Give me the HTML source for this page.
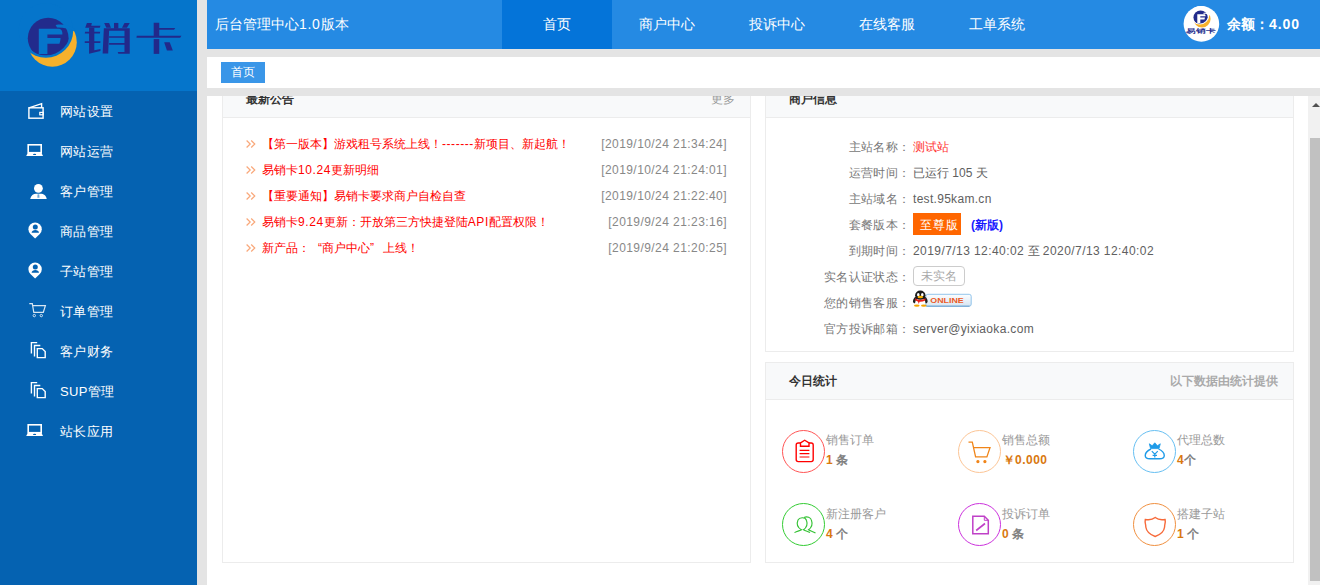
<!DOCTYPE html>
<html><head><meta charset="utf-8">
<style>
*{margin:0;padding:0;box-sizing:border-box}
html,body{width:1320px;height:585px;overflow:hidden;background:#e4e4e4;font-family:"Liberation Sans",sans-serif;}
.abs{position:absolute}
#side{left:0;top:0;width:197px;height:585px;background:#0562b1}
#logo{left:0;top:0;width:197px;height:91px;background:#0575cb}
.mi{position:absolute;left:0;width:197px;height:40px;color:#fff;font-size:13px;line-height:40px}
.mi span{position:absolute;left:60px;top:1px;letter-spacing:0.4px}
.mi svg{position:absolute;left:26px;top:12px}
#hdr{left:207px;top:0;width:1113px;height:49px;background:#258ae3;color:#fff}
.tab{position:absolute;top:0;width:110px;height:49px;line-height:49px;text-align:center;font-size:14px;color:#fff}
#bc{left:207px;top:57px;width:1113px;height:31px;background:#fff}
#main{left:207px;top:96px;width:1118px;height:489px;background:#fff;overflow:hidden}
.panel{position:absolute;border:1px solid #ececec;background:#fff}
.ph{position:absolute;left:0;top:0;right:0;height:37px;background:#f8f9fa;border-bottom:1px solid #ececec;font-size:12px;font-weight:bold;color:#333;line-height:36px;padding-left:23px}
.row{position:absolute;left:0;height:26px;line-height:26px;font-size:12px;white-space:nowrap}
.ann{position:absolute;left:0;width:527px;height:26px;line-height:26px;font-size:12px;white-space:nowrap}
.ann i{position:absolute;left:23px;top:9px;width:10px;height:8px;line-height:0}
.ann b{position:absolute;left:39px;font-weight:normal;color:#f00}
.ann em{position:absolute;right:23px;font-style:normal;color:#888}
.info{position:absolute;left:0;width:527px;height:26px;line-height:26px;font-size:12px;white-space:nowrap;color:#777}
.info u{position:absolute;right:382.6px;text-decoration:none;letter-spacing:0.35px}
.info s{position:absolute;left:147px;text-decoration:none;color:#606060}
.badge{display:inline-block;background:#f60;color:#fff;padding:0 0 0 7px;height:22px;line-height:24px;width:48px;letter-spacing:0.8px;overflow:hidden;vertical-align:top;margin-top:1px}
.unv{display:inline-block;border:1px solid #ccc;border-radius:4px;color:#aaa;padding:0 7px;height:20px;line-height:18px;position:relative;top:-1px}
.circ{position:absolute;width:43px;height:43px;border:1px solid;border-radius:50%}
.st{position:absolute;height:16px;line-height:16px;font-size:12px;color:#999;white-space:nowrap}
.sv{position:absolute;height:16px;line-height:16px;font-size:12px;color:#808080;white-space:nowrap;font-weight:bold}
.sv b{color:#d9780f;font-weight:bold}
.fq{display:inline-block;width:12px;text-align:right}
.fq+span{}
.n{letter-spacing:0.43px}
.n2{letter-spacing:0.6px}
</style></head><body>
<div id="side" class="abs">
  <div id="logo" class="abs">
    <svg class="abs" style="left:0;top:0" width="197" height="91" viewBox="0 0 197 91">
      <defs><clipPath id="cb"><circle cx="45.9" cy="30.5" r="24.8"/></clipPath></defs>
      <circle cx="52.3" cy="42.2" r="24.5" fill="#f6b12c"/>
      <circle cx="45.9" cy="30.5" r="27.3" fill="#0575cb"/>
      <circle cx="48.2" cy="38.2" r="20.4" fill="#222b8c" clip-path="url(#cb)"/>
      <path d="M55.6 25 C63 23.6 70 25.2 75.5 29.8 L74 31.2 C69 28.6 63 27.4 57 27.6 Z" fill="#0575cb"/>
      <path d="M38.8 28.8 H58 C61 28.8 62.6 30.5 62.4 34.6 H47.4 V38 H60.6 C60.4 40.5 60 42 59.4 43.7 H47.4 V54 H38.8 Z" fill="#0575cb"/>
    </svg>
    <svg class="abs" style="left:0;top:0" width="197" height="91" viewBox="0 0 197 91">
      <g fill="#22298a">
        <g transform="translate(82 20) scale(0.061576)">
          <path d="M80 48 H160 L150 92 H300 L288 125 H52 Z"/>
          <path d="M50 190 H295 L290 220 H45 Z"/>
          <path d="M45 345 H300 L296 375 H45 Z"/>
          <path d="M115 125 H200 V492 L300 470 V505 L115 550 Z"/>
          <path d="M360 48 H440 L470 125 H395 Z"/>
          <path d="M520 48 H590 V140 H520 Z"/>
          <path d="M690 48 H775 L730 125 H650 Z"/>
          <path d="M355 135 H775 V550 H590 L580 520 H690 V400 H440 V375 H690 V290 H440 V265 H690 V175 H440 L425 545 H335 Z"/>
        </g>
        <g transform="translate(134 20) scale(0.061576)">
          <path d="M320 45 H410 V130 H670 L650 160 H410 V255 H770 L750 290 H40 L45 255 H320 Z"/>
          <path d="M320 310 H410 V550 H320 Z"/>
          <path d="M490 360 H580 L630 495 H535 Z"/>
        </g>
      </g>
    </svg>
  </div>
  <svg class="abs" style="left:0;top:0" width="197" height="585" viewBox="0 0 197 585">
    <g fill="none" stroke="#fff" stroke-width="1.4">
      <!-- wallet -->
      <rect x="28.9" y="107.8" width="14.2" height="10.4"/>
      <path d="M28.9 107.8 L41.6 103.6 V107.8"/>
      <rect x="39.8" y="112.4" width="3.4" height="2.4" stroke-width="1.2"/>
      <!-- laptop -->
      <rect x="28.2" y="144.8" width="13" height="7.9" stroke-width="1.6"/>
      <!-- cart -->
      <path d="M29.3 303.6 H32.3 L33.8 312.3 H43.3 L45.4 305.6 H32.6" stroke-width="1.2" opacity="0.85"/>
      <circle cx="34.3" cy="315.6" r="1.2" stroke-width="0.9" opacity="0.85"/>
      <circle cx="41.3" cy="315.6" r="1.2" stroke-width="0.9" opacity="0.85"/>
      <!-- copy 1 -->
      <path d="M31.4 353.6 V342.6 H37.2 M34.5 356.4 V345.5 H40.3 M37.3 357.6 V348.6 H42.2 L45.2 351.6 V357.6 Z"/>
      <path d="M31.4 393.6 V382.6 H37.2 M34.5 396.4 V385.5 H40.3 M37.3 397.6 V388.6 H42.2 L45.2 391.6 V397.6 Z"/>
      <!-- laptop 2 -->
      <rect x="28.2" y="424.8" width="13" height="7.9" stroke-width="1.6"/>
    </g>
    <g fill="#fff">
      <path d="M26.2 156.1 L28 152.6 H41.3 L43 156.1 Z"/>
      <ellipse cx="34.6" cy="154.4" rx="1.6" ry="0.6" fill="#0562b1"/>
      <path d="M26.2 436.1 L28 432.6 H41.3 L43 436.1 Z"/>
      <ellipse cx="34.6" cy="434.4" rx="1.6" ry="0.6" fill="#0562b1"/>
      <!-- user -->
      <circle cx="38.4" cy="188.3" r="4.4"/>
      <path d="M30.2 199 C30.8 195.5 33.5 193.8 36 193.8 H40.8 C43.5 193.8 46.2 195.5 46.7 199 Z"/>
      <path d="M37.6 194.2 H39.2 L39.5 197.8 H37.3 Z" fill="#0562b1" opacity="0.55"/>
      <!-- pins -->
      <path d="M35.1 238.6 L30.4 234 A6.7 6.7 0 1 1 39.8 234 Z"/>
      <circle cx="35.3" cy="226.9" r="2.5" fill="#0562b1"/>
      <path d="M31.6 232.8 C31.8 230.8 33.4 229.9 35.3 229.9 C37.2 229.9 38.8 230.8 39 232.8 Z" fill="#0562b1"/>
      <path d="M35.1 278.6 L30.4 274 A6.7 6.7 0 1 1 39.8 274 Z"/>
      <circle cx="35.3" cy="266.9" r="2.5" fill="#0562b1"/>
      <path d="M31.6 272.8 C31.8 270.8 33.4 269.9 35.3 269.9 C37.2 269.9 38.8 270.8 39 272.8 Z" fill="#0562b1"/>
    </g>
  </svg>
  <div class="mi" style="top:91px"><span>网站设置</span></div>
  <div class="mi" style="top:131px"><span>网站运营</span></div>
  <div class="mi" style="top:171px"><span>客户管理</span></div>
  <div class="mi" style="top:211px"><span>商品管理</span></div>
  <div class="mi" style="top:251px"><span>子站管理</span></div>
  <div class="mi" style="top:291px"><span>订单管理</span></div>
  <div class="mi" style="top:331px"><span>客户财务</span></div>
  <div class="mi" style="top:371px"><span>SUP管理</span></div>
  <div class="mi" style="top:411px"><span>站长应用</span></div>
</div>
<div id="hdr" class="abs">
  <div class="abs" style="left:8px;top:0;line-height:49px;font-size:14px">后台管理中心<span style="letter-spacing:0.7px">1.0</span>版本</div>
  <div class="tab" style="left:295px;background:#0474d9">首页</div>
  <div class="tab" style="left:405px">商户中心</div>
  <div class="tab" style="left:515px">投诉中心</div>
  <div class="tab" style="left:625px">在线客服</div>
  <div class="tab" style="left:735px">工单系统</div>
  <svg class="abs" style="left:973px;top:3px" width="42" height="42" viewBox="1180 3 42 42">
    <circle cx="1201.4" cy="23.9" r="17.8" fill="#fff"/>
    <defs><clipPath id="cb2"><circle cx="45.9" cy="30.5" r="24.8"/></clipPath><clipPath id="av"><circle cx="1201.4" cy="23.9" r="17.8"/></clipPath></defs>
    <g clip-path="url(#av)"><g transform="translate(1193.3 10.3) scale(0.35) translate(-27.4 -17.4)">
      <circle cx="52.3" cy="42.2" r="24.5" fill="#f6b12c"/>
      <circle cx="45.9" cy="30.5" r="27.3" fill="#fff"/>
      <circle cx="48.2" cy="38.2" r="20.4" fill="#222b8c" clip-path="url(#cb2)"/>
      <path d="M55.6 25 C63 23.6 70 25.2 75.5 29.8 L74 31.2 C69 28.6 63 27.4 57 27.6 Z" fill="#fff"/>
      <path d="M38.8 28.8 H58 C61 28.8 62.6 30.5 62.4 34.6 H47.4 V38 H60.6 C60.4 40.5 60 42 59.4 43.7 H47.4 V54 H38.8 Z" fill="#fff"/>
    </g></g>
    <text x="1186" y="33.8" font-size="8" font-weight="bold" fill="#2a3290" textLength="30" lengthAdjust="spacingAndGlyphs" transform="translate(0 6.1) scale(1 0.8)">易销卡</text>
  </svg>
  <div class="abs" style="left:1020px;top:0;line-height:49px;font-size:14px;font-weight:bold">余额：<span style="letter-spacing:0.9px">4.00</span></div>
</div>
<div id="bc" class="abs">
  <div class="abs" style="left:14px;top:5px;width:44px;height:21px;background:#3a96e8;color:#fff;font-size:12px;line-height:21px;text-align:center">首页</div>
</div>
<div id="main" class="abs">
  <!-- left panel -->
  <div class="panel" style="left:15px;top:-16px;width:529px;height:483px">
    <div class="ph">最新公告<span style="position:absolute;right:15px;top:0;font-weight:normal;color:#999">更多</span></div>
    <div class="ann" style="top:50px"><i><svg width="10" height="8" viewBox="0 0 10 8"><path d="M0.6 0.5 L4.2 4 L0.6 7.5 M5.2 0.5 L8.8 4 L5.2 7.5" fill="none" stroke="#f9a87a" stroke-width="1.2"/></svg></i><b>【第一版本】游戏租号系统上线！<span style="letter-spacing:0.55px">-------</span>新项目、新起航！</b><em class="n">[2019/10/24 21:34:24]</em></div>
    <div class="ann" style="top:76px"><i><svg width="10" height="8" viewBox="0 0 10 8"><path d="M0.6 0.5 L4.2 4 L0.6 7.5 M5.2 0.5 L8.8 4 L5.2 7.5" fill="none" stroke="#f9a87a" stroke-width="1.2"/></svg></i><b>易销卡<span class="n2">10.24</span>更新明细</b><em class="n">[2019/10/24 21:24:01]</em></div>
    <div class="ann" style="top:102px"><i><svg width="10" height="8" viewBox="0 0 10 8"><path d="M0.6 0.5 L4.2 4 L0.6 7.5 M5.2 0.5 L8.8 4 L5.2 7.5" fill="none" stroke="#f9a87a" stroke-width="1.2"/></svg></i><b>【重要通知】易销卡要求商户自检自查</b><em class="n">[2019/10/24 21:22:40]</em></div>
    <div class="ann" style="top:128px"><i><svg width="10" height="8" viewBox="0 0 10 8"><path d="M0.6 0.5 L4.2 4 L0.6 7.5 M5.2 0.5 L8.8 4 L5.2 7.5" fill="none" stroke="#f9a87a" stroke-width="1.2"/></svg></i><b>易销卡<span class="n2">9.24</span>更新：开放第三方快捷登陆<span class="n2">API</span>配置权限！</b><em class="n">[2019/9/24 21:23:16]</em></div>
    <div class="ann" style="top:154px"><i><svg width="10" height="8" viewBox="0 0 10 8"><path d="M0.6 0.5 L4.2 4 L0.6 7.5 M5.2 0.5 L8.8 4 L5.2 7.5" fill="none" stroke="#f9a87a" stroke-width="1.2"/></svg></i><b>新产品：<span class="fq">“</span>商户中心<span class="fq" style="text-align:left;width:13px">”</span>上线！</b><em class="n">[2019/9/24 21:20:25]</em></div>
  </div>
  <!-- right panel 1 -->
  <div class="panel" style="left:558px;top:-16px;width:529px;height:272px">
    <div class="ph">商户信息</div>
    <div class="info" style="top:53px"><u>主站名称：</u><s style="color:#f33">测试站</s></div>
    <div class="info" style="top:79px"><u>运营时间：</u><s>已运行 105 天</s></div>
    <div class="info" style="top:105px"><u>主站域名：</u><s style="letter-spacing:0.3px">test.95kam.cn</s></div>
    <div class="info" style="top:131px"><u>套餐版本：</u><s><span class="badge">至尊版</span><span style="color:#1a1aff;font-weight:bold;margin-left:10px">(新版)</span></s></div>
    <div class="info" style="top:157px"><u>到期时间：</u><s><span class="n">2019/7/13 12:40:02</span> 至 <span class="n">2020/7/13 12:40:02</span></s></div>
    <div class="info" style="top:183px"><u>实名认证状态：</u><s><span class="unv">未实名</span></s></div>
    <div class="info" style="top:209px"><u>您的销售客服：</u><s><svg style="position:absolute;left:-2px;top:0px" width="62" height="20" viewBox="911 290 62 20">
      <defs><linearGradient id="qg" x1="0" y1="0" x2="0" y2="1"><stop offset="0" stop-color="#fdfeff"/><stop offset="1" stop-color="#d6e5f2"/></linearGradient></defs>
      <rect x="925.8" y="294.3" width="45.4" height="11.9" rx="2" fill="url(#qg)" stroke="#86bde9" stroke-width="0.9"/>
      <path d="M926 306.2 H969.5" stroke="#5f95c8" stroke-width="0.8"/>
      <text x="930.3" y="303.1" font-family="Liberation Sans" font-weight="bold" font-size="7" fill="#ec5a26" textLength="33.4" lengthAdjust="spacingAndGlyphs">ONLINE</text>
      <ellipse cx="915.2" cy="300" rx="1.9" ry="3.4" fill="#222" transform="rotate(20 915.2 300)"/>
      <ellipse cx="925.4" cy="300" rx="1.9" ry="3.4" fill="#222" transform="rotate(-20 925.4 300)"/>
      <ellipse cx="920.3" cy="302.2" rx="5" ry="4.4" fill="#fff"/>
      <ellipse cx="920.3" cy="295.2" rx="5.2" ry="4.6" fill="#1c1c1c"/>
      <ellipse cx="918.3" cy="294.7" rx="1.3" ry="1.6" fill="#fff"/>
      <ellipse cx="922.3" cy="294.7" rx="1.3" ry="1.6" fill="#fff"/>
      <ellipse cx="920.3" cy="297" rx="2.8" ry="1.2" fill="#f8b400"/>
      <path d="M915 298.2 Q920.3 301.8 925.6 298.2 L925.2 300.6 Q920.3 303 915.4 300.6 Z" fill="#e8201a"/>
      <path d="M917.6 300.5 L918.8 304 L919.8 300.8 Z" fill="#e8201a"/>
      <ellipse cx="916.8" cy="305.6" rx="2.8" ry="1.2" fill="#f5a500"/>
      <ellipse cx="923.8" cy="305.6" rx="2.8" ry="1.2" fill="#f5a500"/>
    </svg></s></div>
    <div class="info" style="top:235px"><u>官方投诉邮箱：</u><s style="letter-spacing:0.32px">server@yixiaoka.com</s></div>
  </div>
  <!-- right panel 2 -->
  <div class="panel" style="left:558px;top:266px;width:529px;height:201px">
    <div class="ph">今日统计<span style="position:absolute;right:15px;top:0;color:#aaa">以下数据由统计提供</span></div>
  </div>
  <!-- scrollbar -->
  <div class="abs" style="left:1101px;top:0;width:17px;height:489px;background:#f1f1f1">
    <div class="abs" style="left:4px;top:7px;width:0;height:0;border-left:4px solid transparent;border-right:4px solid transparent;border-bottom:4px solid #505050"></div>
    <div class="abs" style="left:2px;top:42px;width:13px;height:443px;background:#c1c1c1"></div>
  </div>
</div>

<!-- stats overlay -->
<div id="stats" class="abs" style="left:0;top:0;width:1320px;height:585px;pointer-events:none">
  <div class="circ" style="left:782px;top:430px;border-color:#f55"></div>
  <div class="circ" style="left:958px;top:430px;border-color:#fcc596"></div>
  <div class="circ" style="left:1133px;top:430px;border-color:#67bff2"></div>
  <div class="circ" style="left:782px;top:503px;border-color:#33cc33"></div>
  <div class="circ" style="left:958px;top:503px;border-color:#cc33dd"></div>
  <div class="circ" style="left:1133px;top:503px;border-color:#f09040"></div>
  <div class="st" style="left:826px;top:432px">销售订单</div>
  <div class="sv" style="left:826px;top:452px"><b>1</b> 条</div>
  <div class="st" style="left:1002px;top:432px">销售总额</div>
  <div class="sv" style="left:1003px;top:452px"><b>￥<span style="letter-spacing:0.5px">0.000</span></b></div>
  <div class="st" style="left:1177px;top:432px">代理总数</div>
  <div class="sv" style="left:1177px;top:452px"><b>4</b>个</div>
  <div class="st" style="left:826px;top:506px">新注册客户</div>
  <div class="sv" style="left:826px;top:526px"><b>4</b> 个</div>
  <div class="st" style="left:1002px;top:506px">投诉订单</div>
  <div class="sv" style="left:1002px;top:526px"><b>0</b> 条</div>
  <div class="st" style="left:1177px;top:506px">搭建子站</div>
  <div class="sv" style="left:1177px;top:526px"><b>1</b> 个</div>
  <svg class="abs" style="left:0;top:0" width="1320" height="585" viewBox="0 0 1320 585">
    <!-- clipboard -->
    <g fill="none" stroke="#f00" stroke-width="1.4">
      <rect x="796.2" y="443" width="17" height="18.6" rx="2"/>
      <path d="M800.5 446.2 V442.8 L804.7 440.2 L809 442.8 V446.2 Z" fill="#fff"/>
      <path d="M799.6 450.3 H809.4 M799.6 453.6 H809.4 M799.6 457 H809.4" stroke-width="1.2"/>
    </g>
    <!-- cart -->
    <g fill="none" stroke="#f08519" stroke-width="1.3">
      <path d="M968.5 442.2 H972.3 L975.6 456.9 H986.9 L990 447.7 H973.6"/>
      <circle cx="977.9" cy="461.6" r="1" fill="#f08519"/>
      <circle cx="984.9" cy="461.6" r="1" fill="#f08519"/>
    </g>
    <!-- money bag -->
    <g fill="none" stroke="#1e9be8" stroke-width="1.4">
      <path d="M1149.3 443.8 L1152.2 445.8 L1154.8 442.8 L1157.4 445.8 L1160.3 443.8 L1159 448.6 H1150.6 Z" fill="#1e9be8" stroke-width="0.8"/>
      <path d="M1151 449 C1143 453 1144 458.8 1150 458.8 H1159.5 C1165.5 458.8 1166.5 453 1158.6 449"/>
      <path d="M1151.8 451.2 L1154.8 454.2 L1157.8 451.2 M1154.8 454.2 V457.4 M1152.6 455.4 H1157" stroke-width="1.2"/>
    </g>
    <!-- people -->
    <g fill="none" stroke="#33c233" stroke-width="1.1">
      <path d="M794.5 532.6 C797 531 800 530.8 801.5 529.8 C797.5 527.5 796.5 523.5 798 520 C799.5 517 805.5 517 806.5 520.5 C807.8 524 806.5 527.5 803.5 529.8 C805.5 531 808 531.5 810 532.6"/>
      <path d="M804 517.5 C807 516 811 517.5 811.5 520.5 C812.8 524 811.5 527.5 808.5 529.8 C810.5 531 813 531.5 815.5 533"/>
    </g>
    <!-- doc -->
    <g fill="none" stroke="#c040c8" stroke-width="1.5">
      <path d="M972.8 516.3 H984.3 L988.3 520.3 V533.8 H972.8 Z"/>
      <path d="M984.3 516.3 V520.3 H988.3" stroke-width="1"/>
      <path d="M976.2 530.5 L985 523.5" stroke-width="1.6"/>
    </g>
    <!-- shield -->
    <path d="M1155.2 517.5 C1152.5 519.8 1149.5 520.3 1145.3 519.5 C1144.6 523 1146 524.5 1145.8 527 C1146.5 532 1150.5 534.8 1155.2 536.5 C1160 534.8 1164 532 1164.6 527 C1164.4 524.5 1165.8 523 1165.1 519.5 C1161 520.3 1158 519.8 1155.2 517.5 Z" fill="none" stroke="#f76a3a" stroke-width="1.4"/>
  </svg>
</div>
</body></html>
